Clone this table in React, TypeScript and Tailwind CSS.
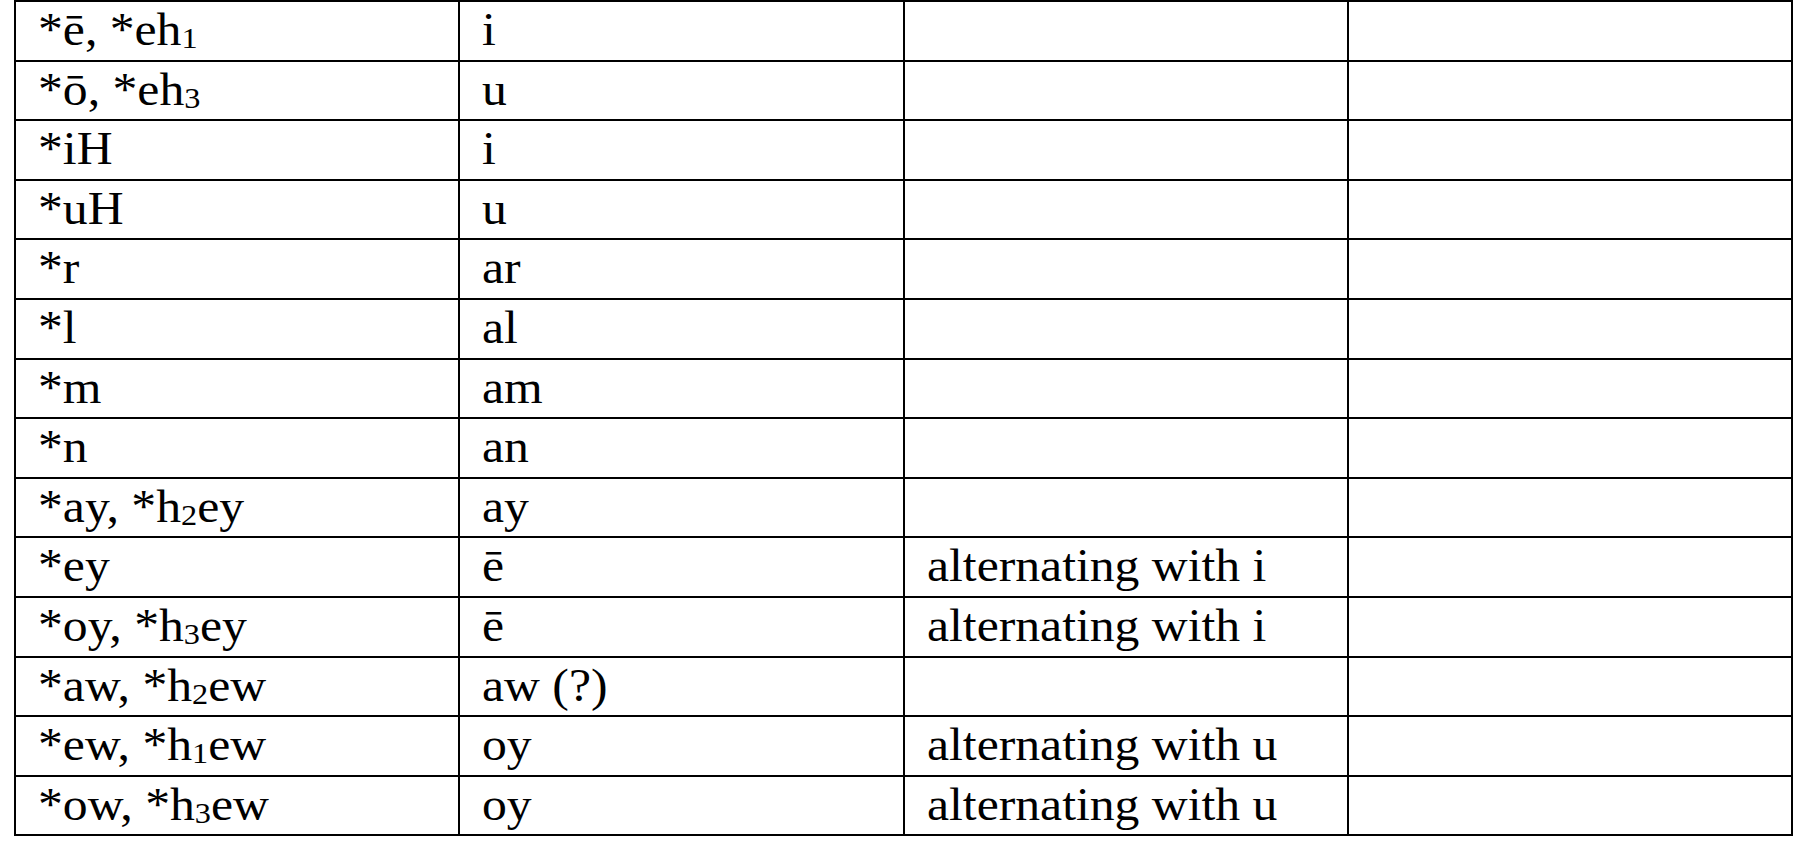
import React from "react";

type Cell = React.ReactNode;

const S = ({ children }: { children: React.ReactNode }) => (
  <span className="text-[0.65em] leading-none align-[-0.1em]">{children}</span>
);

const rows: Cell[][] = [
  [<>*ē, *eh<S>1</S></>, "i", "", ""],
  [<>*ō, *eh<S>3</S></>, "u", "", ""],
  ["*iH", "i", "", ""],
  ["*uH", "u", "", ""],
  ["*r", "ar", "", ""],
  ["*l", "al", "", ""],
  ["*m", "am", "", ""],
  ["*n", "an", "", ""],
  [<>*ay, *h<S>2</S>ey</>, "ay", "", ""],
  ["*ey", "ē", "alternating with i", ""],
  [<>*oy, *h<S>3</S>ey</>, "ē", "alternating with i", ""],
  [<>*aw, *h<S>2</S>ew</>, "aw (?)", "", ""],
  [<>*ew, *h<S>1</S>ew</>, "oy", "alternating with u", ""],
  [<>*ow, *h<S>3</S>ew</>, "oy", "alternating with u", ""],
];

export default function App() {
  return (
    <div className="w-[1810px] h-[842px] bg-white pl-[14px] font-['Liberation_Serif','Times_New_Roman',serif]">
      <table className="border-collapse table-fixed w-[1779px] text-black text-[46px]">
        <tbody>
          {rows.map((r, i) => (
            <tr key={i} className="h-[59.6px]">
              {r.map((c, j) => (
                <td
                  key={j}
                  className="border-2 border-black align-top pt-[5px] pl-[22px] leading-[46px] whitespace-nowrap overflow-hidden"
                >
                  {c !== "" && (
                    <span className="inline-block origin-left scale-x-[1.08]">{c}</span>
                  )}
                </td>
              ))}
            </tr>
          ))}
        </tbody>
      </table>
    </div>
  );
}
